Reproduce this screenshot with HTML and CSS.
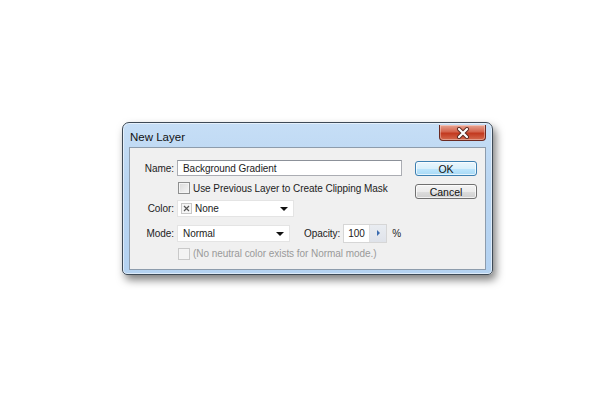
FILE: index.html
```html
<!DOCTYPE html>
<html lang="en">
<head>
    <meta charset="UTF-8">
    <title>New Layer</title>
    <link rel="stylesheet" href="styles.css">
</head>
<body>
    <div class="window">
        <div class="titlebar">
            <span class="title">New Layer</span>
            <div class="close-btn">
                <svg width="16" height="12" viewBox="0 0 16 12">
                    <path d="M4 2 L12 10 M12 2 L4 10" stroke="#5a2a22" stroke-width="4" stroke-linecap="round"/>
                    <path d="M4 2 L12 10 M12 2 L4 10" stroke="#fff" stroke-width="2.2" stroke-linecap="round"/>
                </svg>
            </div>
        </div>

        <div class="panel">
            <div class="form">
                <div class="row row-name">
                    <label class="label">Name:</label>
                    <div class="text-input name-input">Background Gradient</div>
                </div>
                <div class="row row-check">
                    <span class="label"></span>
                    <span class="checkbox"></span>
                    <span class="check-text">Use Previous Layer to Create Clipping Mask</span>
                </div>
                <div class="row row-color">
                    <label class="label">Color:</label>
                    <div class="select color-select">
                        <span class="swatch-none">
                            <svg width="7" height="7" viewBox="0 0 7 7">
                                <path d="M1 1 L6 6 M6 1 L1 6" stroke="#555" stroke-width="1.2"/>
                            </svg>
                        </span>
                        <span class="select-value">None</span>
                        <span class="arrow"></span>
                    </div>
                </div>
                <div class="row row-mode">
                    <label class="label">Mode:</label>
                    <div class="select mode-select">
                        <span class="select-value">Normal</span>
                        <span class="arrow"></span>
                    </div>
                    <span class="opacity-label">Opacity:</span>
                    <div class="opacity-box">
                        <span class="opacity-value">100</span>
                        <span class="stepper"><span class="step-arrow"></span></span>
                    </div>
                    <span class="percent">%</span>
                </div>
                <div class="row row-neutral">
                    <span class="label"></span>
                    <span class="checkbox disabled"></span>
                    <span class="check-text muted">(No neutral color exists for Normal mode.)</span>
                </div>
            </div>

            <div class="buttons">
                <button class="btn btn-default">OK</button>
                <button class="btn">Cancel</button>
            </div>
        </div>
    </div>
</body>
</html>
```

FILE: styles.css
```css
* {
    margin: 0;
    padding: 0;
    box-sizing: border-box;
}

body {
    background-color: white;
    width: 600px;
    height: 400px;
    padding: 122px 0 0 122px;
    font-family: 'Liberation Sans', Arial, sans-serif;
    font-size: 10px;
    letter-spacing: -0.05px;
    color: #222;
}

/* window frame */
.window {
    width: 371px;
    height: 153px;
    border: 1px solid #3e4a56;
    border-radius: 7px 7px 5px 5px;
    background: linear-gradient(#c6def6, #b9d5f1 40%, #b4d2f1);
    box-shadow: 3px 5px 9px rgba(0,0,0,0.5), inset 0 0 0 1px rgba(255,255,255,0.55);
    padding: 0 6px 5px 6px;
}

.titlebar {
    height: 24px;
    display: flex;
    justify-content: space-between;
    align-items: flex-start;
}

.title {
    font-size: 11.5px;
    letter-spacing: 0;
    color: #111;
    padding: 8px 0 0 1px;
}

.close-btn {
    width: 47px;
    height: 16px;
    margin-top: 2px;
    border: 1px solid #6b2a22;
    border-top: none;
    border-radius: 0 0 4px 4px;
    background: linear-gradient(#e8a593, #d3634c 45%, #c2391f 55%, #d46a4e);
    box-shadow: inset 0 0 0 1px rgba(255,255,255,0.35);
    display: flex;
    justify-content: center;
    align-items: center;
}

/* dialog content */
.panel {
    height: 123px;
    background-color: #f0f0f0;
    border: 1px solid #8d9cac;
    display: flex;
    padding: 12px 8px 0 0;
}

.form {
    flex: 1;
}

.row {
    display: flex;
    align-items: center;
}

.label {
    width: 47px;
    padding-right: 3px;
    text-align: right;
    flex-shrink: 0;
}

.row-name {
    height: 16px;
}

.row-check {
    height: 16px;
    margin-top: 4px;
}

.row-color {
    height: 17px;
    margin-top: 4px;
}

.row-mode {
    height: 20px;
    margin-top: 6px;
}

.row-neutral {
    height: 15px;
    margin-top: 3px;
}

.text-input {
    height: 16px;
    border: 1px solid #abadb3;
    border-top-color: #8c9199;
    background-color: white;
    padding: 1px 0 0 5px;
    line-height: 13px;
}

.name-input {
    width: 225px;
}

.checkbox {
    width: 12px;
    height: 12px;
    margin-left: 1px;
    border: 1px solid #8e8f8f;
    background: linear-gradient(135deg, #d8d8d8, #f7f7f7);
    box-shadow: inset 0 0 0 1px #f4f4f4;
}

.checkbox.disabled {
    border-color: #c9c9c9;
    background: #f3f3f3;
}

.check-text {
    margin-left: 3px;
}

.muted {
    color: #9a9a9a;
}

.select {
    height: 17px;
    background-color: white;
    border: 1px solid #e4e4e4;
    display: flex;
    align-items: center;
    position: relative;
    padding-left: 3px;
}

.color-select {
    width: 117px;
}

.mode-select {
    width: 113px;
    padding-left: 5px;
}

.swatch-none {
    width: 11px;
    height: 11px;
    border: 1px solid #c8c8c8;
    background-color: #f6f6f6;
    display: flex;
    justify-content: center;
    align-items: center;
    margin-right: 3px;
}

.arrow {
    position: absolute;
    right: 5px;
    top: 6px;
    border-left: 4px solid transparent;
    border-right: 4px solid transparent;
    border-top: 4px solid #111;
}

.opacity-label {
    margin-left: 14px;
}

.opacity-box {
    width: 44px;
    height: 19px;
    margin-left: 3px;
    border: 1px solid #d6d6d6;
    display: flex;
    background-color: white;
}

.opacity-value {
    width: 25px;
    padding-left: 4px;
    line-height: 17px;
}

.stepper {
    flex: 1;
    border-left: 1px solid #e0e0e0;
    background: linear-gradient(#e9ecf1, #dfe3ea);
    display: flex;
    justify-content: center;
    align-items: center;
}

.step-arrow {
    border-top: 3px solid transparent;
    border-bottom: 3px solid transparent;
    border-left: 3px solid #3a6bb0;
}

.percent {
    margin-left: 5px;
}

/* right column buttons */
.buttons {
    width: 62px;
    display: flex;
    flex-direction: column;
    gap: 8px;
    padding-top: 1px;
}

.btn {
    height: 15px;
    font-family: 'Liberation Sans', Arial, sans-serif;
    font-size: 10.5px;
    color: #111;
    border: 1px solid #707070;
    border-radius: 3px;
    background: linear-gradient(#f3f3f3, #ebebeb 50%, #dddddd 51%, #cfcfcf);
    box-shadow: inset 0 0 0 1px rgba(255,255,255,0.7);
    line-height: 12px;
}

.btn-default {
    border-color: #3c7fb1;
    background: linear-gradient(#eaf6fd, #d9f0fc 50%, #bee6fd 51%, #a7d9f5);
}
```
